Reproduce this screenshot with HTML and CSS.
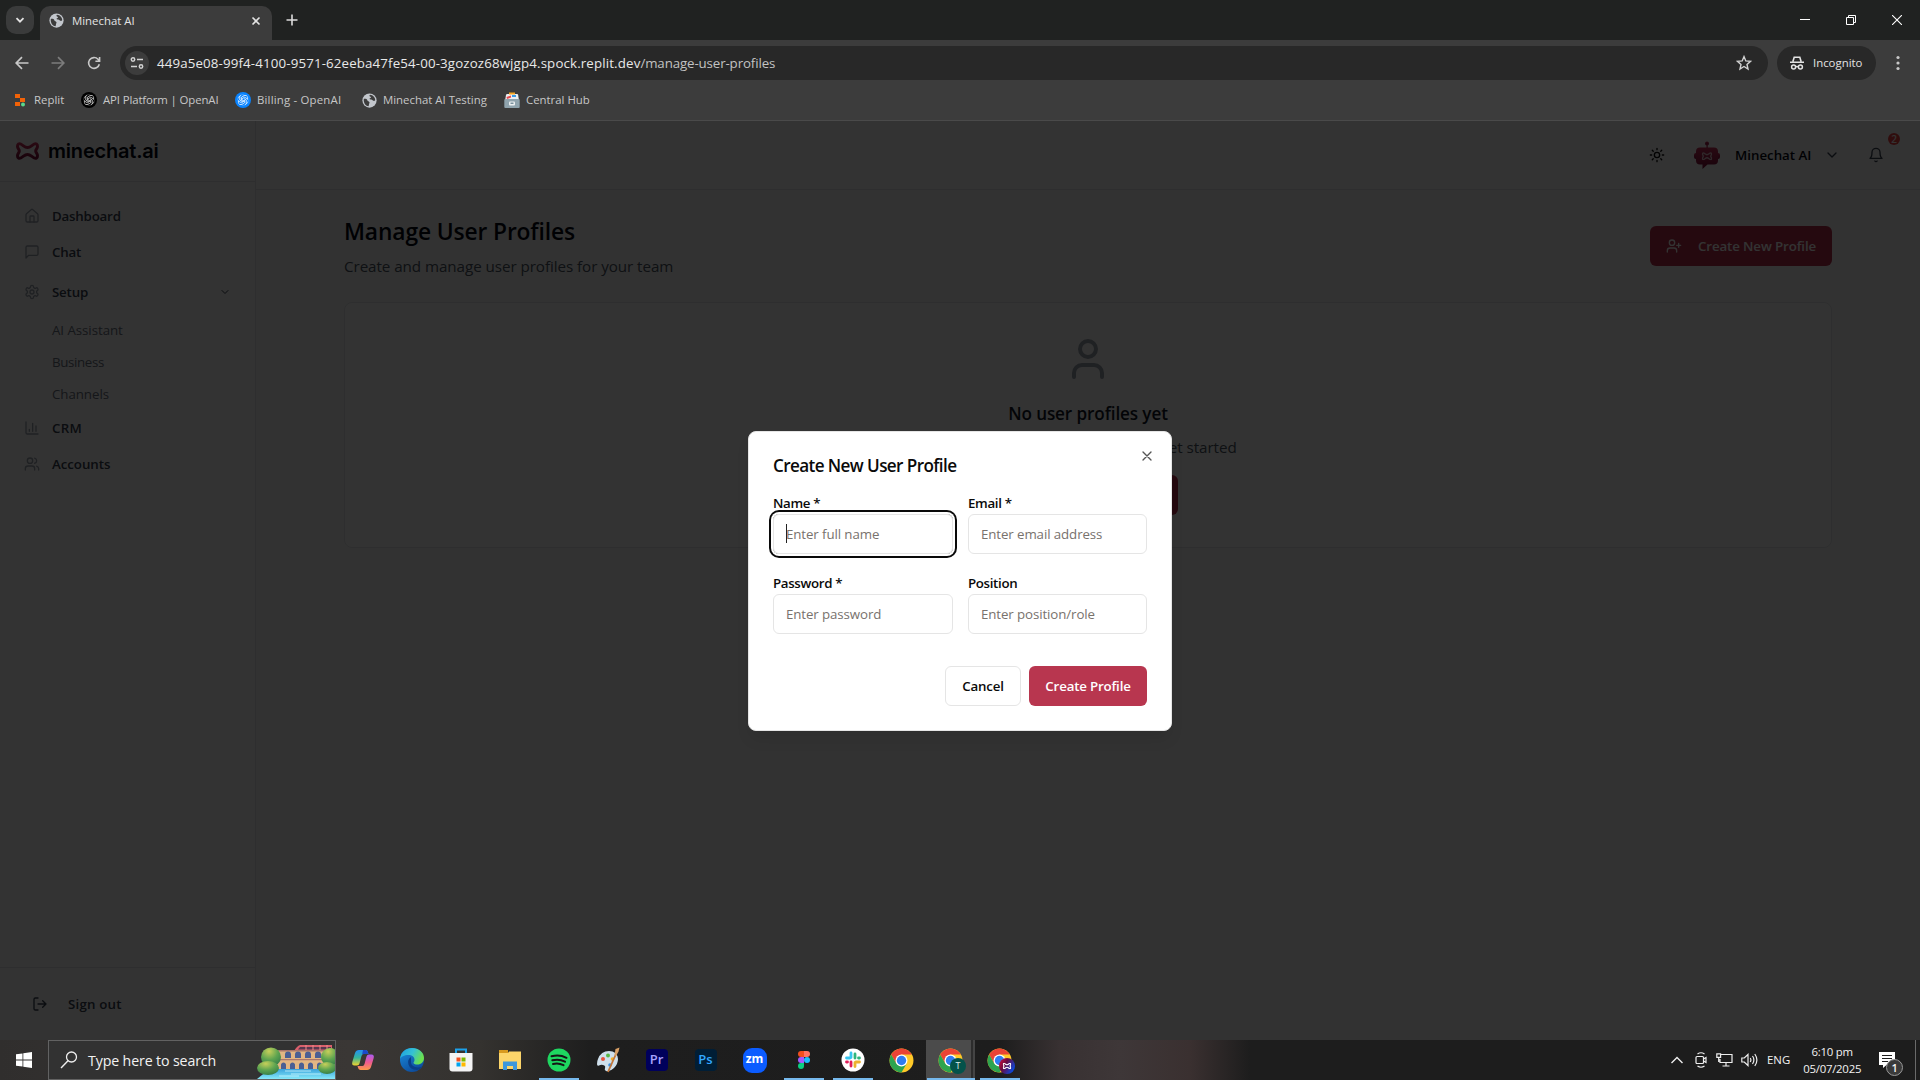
FILE: index.html
```html
<!DOCTYPE html>
<html lang="en">
<head>
<meta charset="utf-8">
<title>Minechat AI</title>
<link rel="stylesheet" href="styles.css">
</head>
<body>
<svg class="defs" width="0" height="0" aria-hidden="true">
  <defs>
    <linearGradient id="brand" x1="0" y1="0" x2="0" y2="1"><stop offset="0" stop-color="#c9305a"/><stop offset="1" stop-color="#7a0f38"/></linearGradient>
    <linearGradient id="edgeA" x1="0" y1="0" x2="1" y2="0.4"><stop offset="0" stop-color="#1b9de2"/><stop offset=".55" stop-color="#35c1d4"/><stop offset="1" stop-color="#6be04e"/></linearGradient>
    <linearGradient id="edgeB" x1="0" y1="0" x2="0.6" y2="1"><stop offset="0" stop-color="#1b8fe0"/><stop offset="1" stop-color="#0d4c9c"/></linearGradient>
    <linearGradient id="copA" x1="0" y1="0" x2="0" y2="1"><stop offset="0" stop-color="#2390f5"/><stop offset=".5" stop-color="#35b59a"/><stop offset="1" stop-color="#f2d22c"/></linearGradient>
    <linearGradient id="copB" x1="0" y1="0" x2="0" y2="1"><stop offset="0" stop-color="#a95bf0"/><stop offset=".5" stop-color="#ee5a90"/><stop offset="1" stop-color="#fb9a49"/></linearGradient>
    <linearGradient id="mine" x1="0" y1="0" x2="1" y2="0.6"><stop offset="0" stop-color="#e0103c"/><stop offset=".45" stop-color="#6a0a40"/><stop offset="1" stop-color="#0848e0"/></linearGradient>
    <linearGradient id="water" x1="0" y1="0" x2="0" y2="1"><stop offset="0" stop-color="#3aa3dc"/><stop offset="1" stop-color="#86e9fa"/></linearGradient>
    <radialGradient id="tree" cx=".4" cy=".2" r=".9"><stop offset="0" stop-color="#c6cf5a"/><stop offset=".5" stop-color="#5ea450"/><stop offset="1" stop-color="#2e7547"/></radialGradient>
    <symbol id="globe" viewBox="0 0 16 16"><circle cx="8" cy="8" r="7.6" fill="#c2c6cc"/><path d="M2 6.200c1.800-.2 3.400.2 3.700 1.400.3 1.300 2 .9 2.300 2.200.2 1-.7 1.400-.6 2.700L7 14.200C3.500 13.800 1.200 10 2 6.200zM8.600 1.800c-1.300.8-.4 2 .5 2.200 1 .3.3 1.600-.6 1.700-.9.2-.3 1.500.9 1.300 1.600-.3 1.900 1.300 3.200 1.400.7 0 1.300-.2 1.500-.9C14 4.500 11.500 2 8.600 1.800z" fill="#3c3c3c"/></symbol>
    <symbol id="knot" viewBox="0 0 24 24"><path d="M22.300 9.800a6 6 0 0 0-.5-4.900 6 6 0 0 0-6.500-2.900A6 6 0 0 0 5 4.200a6 6 0 0 0-4 2.900 6 6 0 0 0 .7 7.100 6 6 0 0 0 .5 4.900 6 6 0 0 0 6.500 2.900A6 6 0 0 0 19 19.800a6 6 0 0 0 4-2.900 6 6 0 0 0-.7-7.100zM5 4.200v8l5 3 5-3M15.300 2 8.500 6v6M22.300 9.800 15.500 6 10 9v6M19 19.800v-8l-5-3M8.700 22l6.800-4v-6M1.700 14.200 8.500 18l6-3.500" fill="none" stroke-width="1.700"/></symbol>
    <symbol id="bow" viewBox="0 0 24 18"><path d="M2 4.300C2 2.200 3.500 1.200 5.200 2c2.500 1.300 4 3.600 6.800 3.600S16.300 3.300 18.800 2C20.500 1.200 22 2.200 22 4.300c0 2.200-1.800 2.700-1.800 4.700s1.800 2.500 1.800 4.700c0 2.100-1.500 3.100-3.200 2.300-2.500-1.300-4-3.600-6.800-3.600S7.700 14.700 5.200 16C3.500 16.800 2 15.800 2 13.700 2 11.500 3.800 11 3.800 9S2 6.500 2 4.300z" fill="none" stroke-width="3" stroke-linejoin="round"/></symbol>
    <symbol id="chrome" viewBox="0 0 48 48"><circle cx="24" cy="24" r="23" fill="#ffc928"/><path d="M4.100 12.500A23 23 0 0 1 43.900 12.500H24L14 29.700z" fill="#ea4335"/><path d="M4.100 12.500A23 23 0 0 0 24 47l10-17.300H14z" fill="#2da44f"/><circle cx="24" cy="24" r="11.500" fill="#fff"/><circle cx="24" cy="24" r="9" fill="#2f7cf0"/></symbol>
  </defs>
</svg>

<header class="browser">
  <div class="tabstrip">
    <button class="tabsearch"><svg width="10" height="10" viewBox="0 0 10 10"><path d="M1.500 3.200 5 6.700l3.500-3.500" fill="none" stroke="#e3e3e3" stroke-width="1.800"/></svg></button>
    <div class="tab">
      <svg width="15" height="15"><use href="#globe"/></svg>
      <span class="tab-title">Minechat AI</span>
      <svg class="tab-close" width="10" height="10" viewBox="0 0 10 10"><path d="M1.500 1.500l7 7M8.500 1.500l-7 7" stroke="#e3e3e3" stroke-width="1.600"/></svg>
    </div>
    <svg class="newtab" width="12" height="12" viewBox="0 0 12 12"><path d="M6 .5v11M.5 6h11" stroke="#dcdcdc" stroke-width="1.600"/></svg>
    <div class="winctl">
      <svg width="10" height="10"><path d="M0 4.500h10" stroke="#fff"/></svg>
      <svg width="10" height="10"><path d="M.5 2.500h7v7h-7zM2.500 2.500v-2h7v7h-2" fill="none" stroke="#fff"/></svg>
      <svg width="10" height="10"><path d="M0 0l10 10M10 0 0 10" stroke="#fff" stroke-width="1.100"/></svg>
    </div>
  </div>
  <div class="toolbar">
    <svg class="tool-back" width="14" height="14" viewBox="0 0 14 14"><path d="M13.500 7H1.500M7 1.200 1.200 7 7 12.800" fill="none" stroke="#c8c8c8" stroke-width="1.700"/></svg>
    <svg class="tool-next" width="14" height="14" viewBox="0 0 14 14"><path d="M.5 7h12M7 1.200 12.800 7 7 12.800" fill="none" stroke="#7c7c7c" stroke-width="1.700"/></svg>
    <svg class="tool-load" width="14" height="14" viewBox="0 0 14 14"><path d="M12.300 8.200A5.400 5.400 0 1 1 11 3.300l1.300 1.500M12.600 1v4.200H8.400" fill="none" stroke="#c8c8c8" stroke-width="1.600"/></svg>
    <div class="omnibox">
      <span class="site"><svg width="14" height="14" viewBox="0 0 14 14" fill="none" stroke="#d2d2d2" stroke-width="1.500"><circle cx="3" cy="3.500" r="1.700"/><path d="M7 3.500h6M1 10.500h6"/><circle cx="11" cy="10.500" r="1.700"/></svg></span>
      <span class="url"><span class="host">449a5e08-99f4-4100-9571-62eeba47fe54-00-3gozoz68wjgp4.spock.replit.dev</span><span class="path">/manage-user-profiles</span></span>
      <svg class="star" width="16" height="16" viewBox="0 0 16 16"><path d="M8 1.600l1.800 4.300 4.700.4-3.500 3.100 1 4.600L8 11.500 4 14l1-4.600L1.500 6.300l4.700-.4z" fill="none" stroke="#d2d2d2" stroke-width="1.400"/></svg>
    </div>
    <div class="incognito">
      <svg width="16" height="16" viewBox="0 0 16 16"><path d="M1 7.300h14M3.900 6.500 5.200 2.200h5.600l1.300 4.300" fill="none" stroke="#e3e3e3" stroke-width="1.600"/><g fill="none" stroke="#e3e3e3" stroke-width="1.500"><circle cx="4.600" cy="11.900" r="2"/><circle cx="11.400" cy="11.900" r="2"/><path d="M6.600 11.600h2.800"/></g></svg>
      <span>Incognito</span>
    </div>
    <svg class="kebab" width="4" height="16" fill="#c8c8c8"><circle cx="2" cy="2.500" r="1.600"/><circle cx="2" cy="8" r="1.600"/><circle cx="2" cy="13.500" r="1.600"/></svg>
  </div>
  <nav class="bookmarks">
    <a><svg width="10" height="14" viewBox="0 0 10 14"><path d="M0 1h5v4H0zM5 5h5v4H5zM0 9h5v4H0z" fill="#f26207"/><circle cx="8" cy="11.500" r="2" fill="#5bd88a"/></svg><span class="bm-a">Replit</span></a>
    <a><svg width="16" height="16" viewBox="0 0 16 16" stroke="#e8e8e8"><circle cx="8" cy="8" r="8" fill="#000" stroke="none"/><svg x="2.500" y="2.500" width="11" height="11"><use href="#knot"/></svg></svg><span class="bm-b">API Platform | OpenAI</span></a>
    <a><svg width="16" height="16" viewBox="0 0 16 16" stroke="#fff"><circle cx="8" cy="8" r="8" fill="#0a84ff" stroke="none"/><svg x="2.500" y="2.500" width="11" height="11"><use href="#knot"/></svg></svg><span class="bm-c">Billing - OpenAI</span></a>
    <a><svg width="15" height="15"><use href="#globe"/></svg><span class="bm-d">Minechat AI Testing</span></a>
    <a><svg width="16" height="16" viewBox="0 0 16 16"><path d="M1 9 2 3q.2-1 1.200-1H13q1 0 1.200 1L15 9z" fill="#eceff1"/><path d="M5 .5h6v2H5z" fill="#f6a623"/><path d="M2.500 5 7 3.500v2L3 7z" fill="#e5484d"/><path d="M8 3h4v2H8z" fill="#3b9be8"/><rect x=".3" y="7" width="15.400" height="9" rx="1" fill="#90a4ae"/><rect x="5" y="9.500" width="6" height="4" rx="1" fill="#eceff1"/><path d="M6.500 10.500h3v1.500h-3z" fill="#78909c"/></svg><span class="bm-e">Central Hub</span></a>
  </nav>
</header>

<div class="app">
  <aside class="sidebar">
    <div class="brand"><svg width="25" height="18" stroke="url(#brand)"><use href="#bow"/></svg><span>minechat.ai</span></div>
    <nav class="menu">
      <a class="item"><svg class="ico" viewBox="0 0 24 24"><path d="M15 21v-8a1 1 0 0 0-1-1h-4a1 1 0 0 0-1 1v8"/><path d="M3 10a2 2 0 0 1 .709-1.528l7-5.999a2 2 0 0 1 2.582 0l7 5.999A2 2 0 0 1 21 10v9a2 2 0 0 1-2 2H5a2 2 0 0 1-2-2z"/></svg>Dashboard</a>
      <a class="item"><svg class="ico" viewBox="0 0 24 24"><path d="M21 15a2 2 0 0 1-2 2H7l-4 4V5a2 2 0 0 1 2-2h14a2 2 0 0 1 2 2z"/></svg>Chat</a>
      <a class="item item-setup"><svg class="ico" viewBox="0 0 24 24"><path d="M12.220 2h-.44a2 2 0 0 0-2 2v.18a2 2 0 0 1-1 1.730l-.43.25a2 2 0 0 1-2 0l-.15-.08a2 2 0 0 0-2.730.73l-.22.38a2 2 0 0 0 .73 2.730l.15.1a2 2 0 0 1 1 1.720v.51a2 2 0 0 1-1 1.740l-.15.09a2 2 0 0 0-.73 2.730l.22.38a2 2 0 0 0 2.730.73l.15-.08a2 2 0 0 1 2 0l.43.25a2 2 0 0 1 1 1.730V20a2 2 0 0 0 2 2h.44a2 2 0 0 0 2-2v-.18a2 2 0 0 1 1-1.730l.43-.25a2 2 0 0 1 2 0l.15.08a2 2 0 0 0 2.730-.73l.22-.39a2 2 0 0 0-.73-2.730l-.15-.08a2 2 0 0 1-1-1.740v-.5a2 2 0 0 1 1-1.740l.15-.09a2 2 0 0 0 .73-2.730l-.22-.38a2 2 0 0 0-2.730-.73l-.15.08a2 2 0 0 1-2 0l-.43-.25a2 2 0 0 1-1-1.730V4a2 2 0 0 0-2-2z"/><circle cx="12" cy="12" r="3"/></svg>Setup<svg class="caret" width="12" height="12" viewBox="0 0 24 24"><path d="m6 9 6 6 6-6"/></svg></a>
      <a class="sub">AI Assistant</a>
      <a class="sub tight">Business</a>
      <a class="sub">Channels</a>
      <a class="item"><svg class="ico" viewBox="0 0 24 24"><path d="M3 3v16a2 2 0 0 0 2 2h16M18 17V9M13 17V5M8 17v-3"/></svg><span class="crm">CRM</span></a>
      <a class="item"><svg class="ico" viewBox="0 0 24 24"><path d="M16 21v-2a4 4 0 0 0-4-4H6a4 4 0 0 0-4 4v2"/><circle cx="9" cy="7" r="4"/><path d="M22 21v-2a4 4 0 0 0-3-3.870M16 3.130a4 4 0 0 1 0 7.750"/></svg><span class="accounts">Accounts</span></a>
    </nav>
    <div class="signout"><svg class="ico dark" viewBox="0 0 24 24"><path d="M9 21H5a2 2 0 0 1-2-2V5a2 2 0 0 1 2-2h4M16 17l5-5-5-5M21 12H9"/></svg>Sign out</div>
  </aside>

  <main class="main">
    <div class="topbar">
      <svg class="ico black" viewBox="0 0 24 24"><circle cx="12" cy="12" r="4"/><path d="M12 2v2M12 20v2M4.930 4.930l1.410 1.410M17.660 17.660l1.410 1.410M2 12h2M20 12h2M6.340 17.660l-1.410 1.410M19.070 4.930l-1.410 1.410"/></svg>
      <svg class="robot" width="28" height="28" viewBox="0 0 28 28"><g fill="url(#brand)"><circle cx="14" cy="2.500" r="2"/><path d="M13.500 3h1.200v5h-1.200z"/><rect x="1" y="12" width="4" height="6" rx="2"/><rect x="23" y="12" width="4" height="6" rx="2"/><path d="M7 6.500h14q4 0 4 4v9q0 4-4 4h-6.500L9.500 28v-4.500H7q-4 0-4-4v-9q0-4 4-4z"/></g><svg x="8.500" y="11" width="11" height="8.500" stroke="#e8c8d0"><use href="#bow"/></svg></svg>
      <span class="account">Minechat AI</span>
      <svg class="ico slate chev" viewBox="0 0 24 24"><path d="m6 9 6 6 6-6"/></svg>
      <span class="bell"><svg class="ico slate" viewBox="0 0 24 24"><path d="M6 8a6 6 0 0 1 12 0c0 7 3 9 3 9H3s3-2 3-9M10.300 21a1.940 1.940 0 0 0 3.400 0"/></svg><b class="badge">2</b></span>
    </div>
    <section class="content">
      <div class="pagehead">
        <div><h1>Manage User Profiles</h1><p>Create and manage user profiles for your team</p></div>
        <button class="primary"><svg class="ico" viewBox="0 0 24 24"><path d="M16 21v-2a4 4 0 0 0-4-4H6a4 4 0 0 0-4 4v2"/><circle cx="9" cy="7" r="4"/><path d="M19 8v6M22 11h-6"/></svg>Create New Profile</button>
      </div>
      <div class="card">
        <svg class="person" width="48" height="48" viewBox="0 0 24 24"><path d="M19 21v-2a4 4 0 0 0-4-4H9a4 4 0 0 0-4 4v2"/><circle cx="12" cy="7" r="4"/></svg>
        <h2>No user profiles yet</h2>
        <p>Create your first user profile to get started</p>
        <button class="primary small"></button>
      </div>
    </section>
  </main>

  <div class="overlay">
    <form class="modal">
      <svg class="close" width="16" height="16" viewBox="0 0 24 24"><path d="M18 6 6 18M6 6l12 12"/></svg>
      <h3>Create New User Profile</h3>
      <div class="fields">
        <div class="field"><label>Name *</label><div class="input focus">Enter full name</div></div>
        <div class="field"><label>Email *</label><div class="input">Enter email address</div></div>
        <div class="field"><label>Password *</label><div class="input">Enter password</div></div>
        <div class="field"><label>Position</label><div class="input">Enter position/role</div></div>
      </div>
      <div class="actions"><span class="btn cancel">Cancel</span><span class="btn save">Create Profile</span></div>
    </form>
  </div>
</div>

<footer class="taskbar">
  <div class="start"><svg width="16" height="16" viewBox="0 0 16 16" fill="#fff"><path d="M0 2.300 6.500 1.400v6.200H0zM7.300 1.300 16 0v7.600H7.300zM0 8.400h6.500v6.200L0 13.700zM7.300 8.400H16V16l-8.700-1.300z"/></svg></div>
  <div class="search">
    <svg width="18" height="18" viewBox="0 0 18 18"><circle cx="11.500" cy="6" r="5" fill="none" stroke="#eee" stroke-width="1.300"/><path d="M8 9.700 1 17" stroke="#eee" stroke-width="1.400"/></svg>
    <span>Type here to search</span>
    <svg class="art" width="78" height="34" viewBox="0 0 78 34"><path d="M0 34q8-8 22-10h56v10z" fill="url(#water)"/><path d="M37 6q3-5 6-6h32v6z" fill="#d9606c"/><path d="M43 2h31v2.500H41z" fill="#57384f"/><path d="M49 0v6M56 0v6M63 0v6M70 0v6" stroke="#ee8b8b"/><path d="M20 6h58v18H20z" fill="#e2b683"/><path d="M20 5h58v1.500H20zM20 14h58v1.200H20z" fill="#a9766b"/><g fill="#4a5f94"><path d="M28 13V9.500a3 3 0 0 1 6 0V13zM38 13V9.500a3 3 0 0 1 6 0V13zM48 13V9.500a3 3 0 0 1 6 0V13zM58 13V9.500a3 3 0 0 1 6 0V13zM68 13V9.500a3 3 0 0 1 6 0V13z"/><path d="M24 24v-4.500a2.600 2.600 0 0 1 5 0V24zM33 24v-4.500a2.600 2.600 0 0 1 5 0V24zM42 24v-4.500a2.600 2.600 0 0 1 5 0V24zM51 24v-4.500a2.600 2.600 0 0 1 5 0V24zM60 24v-4.500a2.600 2.600 0 0 1 5 0V24z"/></g><g fill="url(#tree)"><ellipse cx="14" cy="12" rx="10" ry="9.500"/><ellipse cx="11" cy="23" rx="11" ry="7"/><ellipse cx="73" cy="12" rx="9" ry="9"/><ellipse cx="70" cy="23" rx="9" ry="6"/></g><path d="M28 26h26M34 29h30M22 31h20" stroke="#c9f6ff" stroke-width=".8"/></svg>
  </div>
  <div class="apps">
    <span><svg width="24" height="24" viewBox="0 0 24 24"><path d="M8 2h6.500q1.800 0 2.300 1.800L17.500 6H12.500Q11 6 10.500 8L8.500 15.500Q8 17.500 6 17.500H3.500Q.5 17.500 1.300 14L4 5Q5 2 8 2z" fill="url(#copA)"/><path d="M12 2h2.500q1.800 0 2.300 1.800L17.500 6H12.800Q11 6 11 7z" fill="#1c49c8"/><path d="M16 22H9.500q-1.800 0-2.300-1.800L6.500 18h5q1.500 0 2-2l2-7.500Q16 6.500 18 6.500h2.500q3 0 2.200 3.500L20 19q-1 3-4 3z" fill="url(#copB)"/></svg></span>
    <span><svg width="26" height="26" viewBox="0 0 26 26"><circle cx="13" cy="13" r="12" fill="url(#edgeB)"/><path d="M1 12C2 4.500 7 1 13 1c7 0 12 4.500 12 10 0 4-3 6.500-6.500 6.500-2.500 0-4-.8-4-1.800 0-.8 1-1 1-3C15.500 10 13 8 9.500 8 5 8 2 10 1 12z" fill="url(#edgeA)"/><path d="M12 10q-4 2.500-2.500 7.500T18 23q4-1 5.500-3.500-4 1.700-7.500.5-4.500-1.500-4-6.500z" fill="#0a3f88"/></svg></span>
    <span><svg width="24" height="24" viewBox="0 0 24 24"><path d="M7 6V1.500h10V6" fill="none" stroke="#1da1ea" stroke-width="2"/><path d="M.5 5h23v15.500q0 3-3 3h-17q-3 0-3-3z" fill="#f4f4f4"/><path d="M7.500 9.500h4v4h-4z" fill="#f25022"/><path d="M12.500 9.500h4v4h-4z" fill="#7fba00"/><path d="M7.500 14.500h4v4h-4z" fill="#00a4ef"/><path d="M12.500 14.500h4v4h-4z" fill="#ffb900"/></svg></span>
    <span><svg width="22" height="20" viewBox="0 0 22 20"><path d="M0 0h9v4H0z" fill="#d89a1e"/><path d="M0 3h9l1-1.500h12V19H0z" fill="#fcd56a"/><path d="M4 20v-8.500h14V20h-4v-4H8v4z" fill="#3d97dc"/></svg></span>
    <span class="run"><svg width="24" height="24" viewBox="0 0 24 24"><circle cx="12" cy="12" r="11.500" fill="#1ed760"/><path d="M4.500 8.300q8-2.200 15 1.500M5.300 12.300q6.800-1.800 12.700 1.400M6 16q5.500-1.400 10.500 1.200" fill="none" stroke="#151515" stroke-width="2" stroke-linecap="round"/></svg></span>
    <span><svg width="24" height="26" viewBox="0 0 24 26"><path d="M2 12Q5 4 13 4t9 8q0 5-4 9-4 4-8 3-2-1-1-3t-2-3q-2-.5-4 .5T1 17q0-3 1-5z" fill="#cfe0ec"/><circle cx="7" cy="12" r="2" fill="#e5533d"/><circle cx="12" cy="8.500" r="2" fill="#58b947"/><circle cx="16.500" cy="12" r="1.800" fill="#f3b229"/><circle cx="14" cy="18" r="1.800" fill="#3b8ee0"/><path d="M12 25 20 7" stroke="#c3763a" stroke-width="1.800"/><path d="m18.500 8 1-6 4-1.500-1 4-2.500 4.500z" fill="#d9a066"/></svg></span>
    <span><i class="adobe pr">Pr</i></span>
    <span><i class="adobe ps">Ps</i></span>
    <span><i class="zoom">zm</i></span>
    <span class="run"><svg width="12" height="18" viewBox="0 0 12 18"><path d="M3 0h3v6H3a3 3 0 0 1 0-6z" fill="#f24e1e"/><path d="M6 0h3a3 3 0 0 1 0 6H6z" fill="#ff7262"/><path d="M3 6h3v6H3a3 3 0 0 1 0-6z" fill="#a259ff"/><circle cx="9" cy="9" r="3" fill="#1abcfe"/><path d="M3 12h3v3a3 3 0 1 1-3-3z" fill="#0acf83"/></svg></span>
    <span class="run"><svg width="24" height="24" viewBox="0 0 24 24"><circle cx="12" cy="12" r="11.500" fill="#fff"/><g stroke-width="2.800" stroke-linecap="round"><path d="M10 5v4.500M5.500 10h3.500" stroke="#36c5f0"/><path d="M14 6v4M17.500 10h1" stroke="#2eb67d"/><path d="M14 18.500v-4M15 14h3.500" stroke="#ecb22e"/><path d="M10 14v4M5.500 14h1" stroke="#e01e5a"/></g></svg></span>
    <span><svg width="25" height="25"><use href="#chrome"/></svg></span>
    <span class="run active"><svg width="25" height="25"><use href="#chrome"/></svg><b class="who t">T</b></span>
    <span class="run"><svg width="25" height="25"><use href="#chrome"/></svg><b class="who"><svg width="16" height="16" viewBox="0 0 16 16"><circle cx="8" cy="8" r="8" fill="url(#mine)"/><svg x="3.500" y="4.500" width="9" height="7" stroke="#fff"><use href="#bow"/></svg></svg></b></span>
  </div>
  <div class="tray">
    <svg width="12" height="8" viewBox="0 0 12 8"><path d="m.5 7 5.500-5.500L11.500 7" fill="none" stroke="#eee" stroke-width="1.400"/></svg>
    <svg class="meet" width="12" height="16" viewBox="0 0 12 16" fill="none" stroke="#eee" stroke-width="1.200"><rect x="1" y="4.500" width="7.500" height="7" rx="1"/><path d="m8.500 7 2.500-1.500v5L8.500 9M2.500 2Q6-.5 9.500 2M2.500 14q3.500 2.500 7 0"/></svg>
    <svg class="net" width="17" height="14" viewBox="0 0 17 14" fill="none" stroke="#eee" stroke-width="1.200"><path d="M5 1.500h11v8H4V6M10 9.500v3.500M6.500 13h7M.8.800h3.800v3.600H.8zM2.700 4.400V9"/></svg>
    <svg class="vol" width="17" height="14" viewBox="0 0 17 14" fill="none" stroke="#eee" stroke-width="1.200"><path d="M.8 5h2.500L7 1.500v11L3.300 9H.8zM9.200 5q1.400 2 0 4M11.500 3q2.800 4 0 8M13.800 1q4.200 6 0 12"/></svg>
    <span class="lang">ENG</span>
    <span class="clock"><span>6:10 pm</span><span class="date">05/07/2025</span></span>
    <span class="notes"><svg width="24" height="24" viewBox="0 0 24 24"><path d="M0 0h16v13H7.500L4 16v-3H0z" fill="#fff"/><path d="M3 3.500h10M3 6.500h10M3 9.500h6" stroke="#1d1d1d" stroke-width="1.200"/></svg><b>1</b></span>
  </div>
</footer>
</body>
</html>
```
FILE: styles.css
```css
* { box-sizing: border-box; }
body {
  margin: 0;
  width: 1920px;
  height: 1080px;
  overflow: hidden;
  display: flex;
  flex-direction: column;
  background: #333;
  font-family: "Open Sans", "Noto Sans", sans-serif;
  font-size: 13.3px;
  line-height: 20px;
}
h1, h2, h3, p { margin: 0; }
svg { display: block; flex: none; }
.defs { position: absolute; }
button { border: 0; padding: 0; font: inherit; }

/* browser chrome */
.browser { height: 121px; background: #3c3c3c; border-bottom: 1px solid #4a4a4a; color: #c7c7c7; font-size: 11.4px; }
.tabstrip { height: 40px; background: #202221; display: flex; align-items: flex-end; padding-left: 6px; }
.tabsearch { width: 28px; height: 28px; border-radius: 10px; background: #3a3b3b; display: grid; place-items: center; margin-bottom: 6px; }
.tab { margin-left: 6px; width: 232px; height: 34px; background: #3c3c3c; border-radius: 10px 10px 0 0; display: flex; align-items: center; padding: 0 11px 5px 9px; color: #e3e3e3; }
.tab-title { margin-left: 8px; flex: 1; }
.newtab { margin: 0 0 14px 14px; }
.winctl { margin-left: auto; display: flex; gap: 36px; padding: 0 18px 15px 0; }
.toolbar { height: 46px; display: flex; align-items: center; padding: 0 20px 0 15px; }
.tool-next { margin-left: 22px; }
.tool-load { margin-left: 22px; margin-right: 1px; }
.omnibox { margin-left: 18px; width: 1648px; height: 34px; border-radius: 17px; background: #282828; display: flex; align-items: center; padding: 0 16px 0 5px; }
.site { width: 24px; height: 24px; border-radius: 12px; background: #3c3c3c; display: grid; place-items: center; }
.url { margin-left: 8px; flex: 1; font-size: 13.3px; color: #e8e8e8; white-space: nowrap; }
.host { letter-spacing: .14px; }
.path { letter-spacing: -.12px; color: #c2c2c2; }
.incognito { margin-left: 9px; width: 99px; height: 34px; border-radius: 17px; background: #282828; display: flex; align-items: center; gap: 8px; padding-left: 12px; color: #e3e3e3; }
.kebab { margin-left: 20px; }
.bookmarks { height: 28px; display: grid; grid-template-columns: 66px 154px 127px 142px auto; padding-left: 15px; }
.bookmarks a { display: flex; align-items: center; white-space: nowrap; }
.bookmarks span { margin-left: 6px; }
.bookmarks .bm-a { margin-left: 9px; }
.bookmarks .bm-b { letter-spacing: -.12px; }
.bookmarks .bm-c { letter-spacing: .19px; }

/* application */
.app { position: relative; height: 919px; display: flex; background: #fafafa; }
.ico { width: 16px; height: 16px; }
.ico, .caret, .person, .close { fill: none; stroke: #9ca3af; stroke-width: 2; stroke-linecap: round; stroke-linejoin: round; }
.ico.dark { stroke: #374151; }
.ico.black { stroke: #0a0a0a; }
.sidebar { width: 256px; background: #fff; border-right: 1px solid #e5e7eb; display: flex; flex-direction: column; font-weight: 600; color: #374151; }
.brand { height: 61px; border-bottom: 1px solid #e5e7eb; display: flex; align-items: center; gap: 8px; padding: 0 0 0 15px; font: 600 20px/24px Inter, sans-serif; letter-spacing: -.2px; color: #030712; }
.menu { padding-top: 16px; flex: 1; display: flex; flex-direction: column; }
.item { height: 36px; display: flex; align-items: center; gap: 12px; padding: 0 24px; letter-spacing: -.2px; }
.item-setup { height: 44px; }
.crm { letter-spacing: .3px; }
.accounts { letter-spacing: -.05px; }
.caret { margin-left: auto; stroke: #374151; }
.sub { height: 32px; line-height: 32px; padding-left: 52px; font-weight: 400; color: #6b7280; letter-spacing: -.05px; }
.tight { letter-spacing: -.35px; }
.signout { height: 73px; border-top: 1px solid #e5e7eb; display: flex; align-items: center; gap: 20px; padding-left: 32px; letter-spacing: .2px; }
.main { flex: 1; }
.topbar { height: 69px; background: #fff; border-bottom: 1px solid #e5e7eb; display: flex; align-items: center; padding-right: 36px; justify-content: flex-end; }
.robot { margin: 0 14px 0 28px; }
.account { width: 89px; font-weight: 600; color: #030712; }
.ico.slate { stroke: #374151; }
.bell { position: relative; margin-left: 28px; }
.badge { position: absolute; left: 20px; top: -14px; width: 12px; height: 12px; border-radius: 6px; background: #ef4444; color: #fff; font: 600 10px/12px "Open Sans", sans-serif; text-align: center; }
.content { width: 1488px; margin-left: 88px; padding-top: 24px; }
.pagehead { display: flex; justify-content: space-between; align-items: center; height: 64px; }
h1 { font-size: 22.8px; line-height: 36px; font-weight: 600; letter-spacing: -.13px; color: #030712; }
.pagehead p { font-size: 15.2px; line-height: 24px; margin-top: 4px; color: #4b5563; letter-spacing: -.06px; }
.primary { width: 182px; height: 40px; border-radius: 6px; background: #b8304c; color: #fff; font-weight: 600; letter-spacing: -.12px; display: flex; align-items: center; gap: 16px; padding-left: 16px; }
.primary .ico { stroke: #fff; }
.card { height: 246px; margin-top: 24px; border: 1px solid #e5e7eb; border-radius: 8px; background: #fff; display: flex; flex-direction: column; align-items: center; padding-top: 32px; }
.person { stroke: #9ca3af; }
h2 { margin-top: 17px; font-size: 17.1px; line-height: 28px; font-weight: 600; letter-spacing: -.1px; color: #111827; }
.card p { margin-top: 7px; font-size: 15.2px; line-height: 24px; color: #4b5563; letter-spacing: -.03px; }
.small { width: 180px; margin-top: 16px; }

/* dialog */
.overlay { position: absolute; inset: 0; background: rgba(0, 0, 0, .8); display: grid; place-items: center; }
.modal { position: relative; width: 424px; height: 300px; background: #fff; border: 1px solid #e5e5e5; border-radius: 8px; padding: 24px; box-shadow: 0 10px 15px -3px rgba(0, 0, 0, .1); color: #0a0a0a; font-weight: 600; }
.close { position: absolute; right: 16px; top: 16px; stroke: #555; }
h3 { font-size: 17.1px; line-height: 20px; font-weight: 600; letter-spacing: -.6px; }
.fields { display: grid; grid-template-columns: 180px 179px; gap: 16px 15px; padding-top: 14px; }
.field { height: 64px; }
label { display: block; height: 24px; line-height: 26px; letter-spacing: -.34px; }
.input { height: 40px; line-height: 38px; border: 1px solid #e5e5e5; border-radius: 6px; padding-left: 12px; font-weight: 400; letter-spacing: -.1px; color: #78726d; }
.focus { box-shadow: 0 0 0 2px #fff, 0 0 0 4px #0a0a0a; }
.focus::before { content: ""; float: left; width: 1px; height: 19px; margin: 9px -1px 0 0; background: #222; }
.actions { display: flex; justify-content: flex-end; gap: 8px; margin-top: 32px; }
.btn { height: 40px; line-height: 40px; text-align: center; border-radius: 6px; letter-spacing: -.18px; }
.cancel { width: 76px; border: 1px solid #e5e5e5; line-height: 38px; }
.save { width: 118px; background: #b8364f; color: #fff; }

/* taskbar */
.taskbar { height: 40px; display: flex; background: linear-gradient(90deg, #302e2d 0, #3a3735 350px, #34322f 480px, #1e1e1e 590px, #1d1d1d 1000px, #383132 1060px, #3e3738 1120px, #3a3030 1190px, #1d1d1d 1250px); color: #f2f2f2; }
.start { width: 48px; display: grid; place-items: center; }
.search { width: 288px; border: 1px solid #626262; background: #323232; display: flex; align-items: center; padding-left: 11px; }
.search span { margin-left: 10px; padding-top: 1px; flex: 1; font-size: 14.2px; letter-spacing: -.13px; white-space: nowrap; }
.art { align-self: flex-end; }
.apps { display: flex; margin-left: 2px; }
.apps > span { position: relative; width: 49px; height: 40px; display: grid; place-items: center; }
.run::after { content: ""; position: absolute; left: 5px; bottom: 0; width: 40px; height: 2px; background: #76b9ed; }
.apps .active { background: linear-gradient(90deg, #4b4b4b 45px, #2c2c2c 45px, #2c2c2c 47px, #444 47px); }
.active::after { left: 1px; width: 48px; }
.adobe { width: 22px; height: 22px; border-radius: 4px; font: 600 13px/21px "Open Sans", sans-serif; text-align: center; }
.pr { background: #00005b; color: #a6a2ff; }
.ps { background: #001e36; color: #31a8ff; }
.zoom { width: 24px; height: 25px; border-radius: 9px; background: #0b5cff; color: #fff; font: 700 12px/22px "Open Sans", sans-serif; text-align: center; }
.who { position: absolute; left: 24px; top: 18px; width: 16px; height: 16px; }
.t { border-radius: 8px; background: #04524a; color: #dfeeee; font: 400 9px/16px "Open Sans", sans-serif; text-align: center; }
.tray { margin-left: auto; width: 249px; display: flex; align-items: center; font-size: 11.4px; }
.meet { margin-left: 12px; }
.net { margin-left: 9px; }
.vol { margin-left: 8px; }
.lang { margin-left: 9px; }
.clock { margin-left: 7px; width: 70px; text-align: center; display: flex; flex-direction: column; line-height: 17px; letter-spacing: -.25px; }
.notes { position: relative; margin: 7px 0 0 12px; }
.notes b { position: absolute; left: 7px; top: 7px; width: 17px; height: 17px; border: 1px solid #999; border-radius: 9px; background: #3a3a3a; font: 600 11px/15px "Open Sans", sans-serif; text-align: center; }
.tray::after { content: ""; width: 1px; height: 40px; margin-left: 12px; background: #6a6a6a; }
```
